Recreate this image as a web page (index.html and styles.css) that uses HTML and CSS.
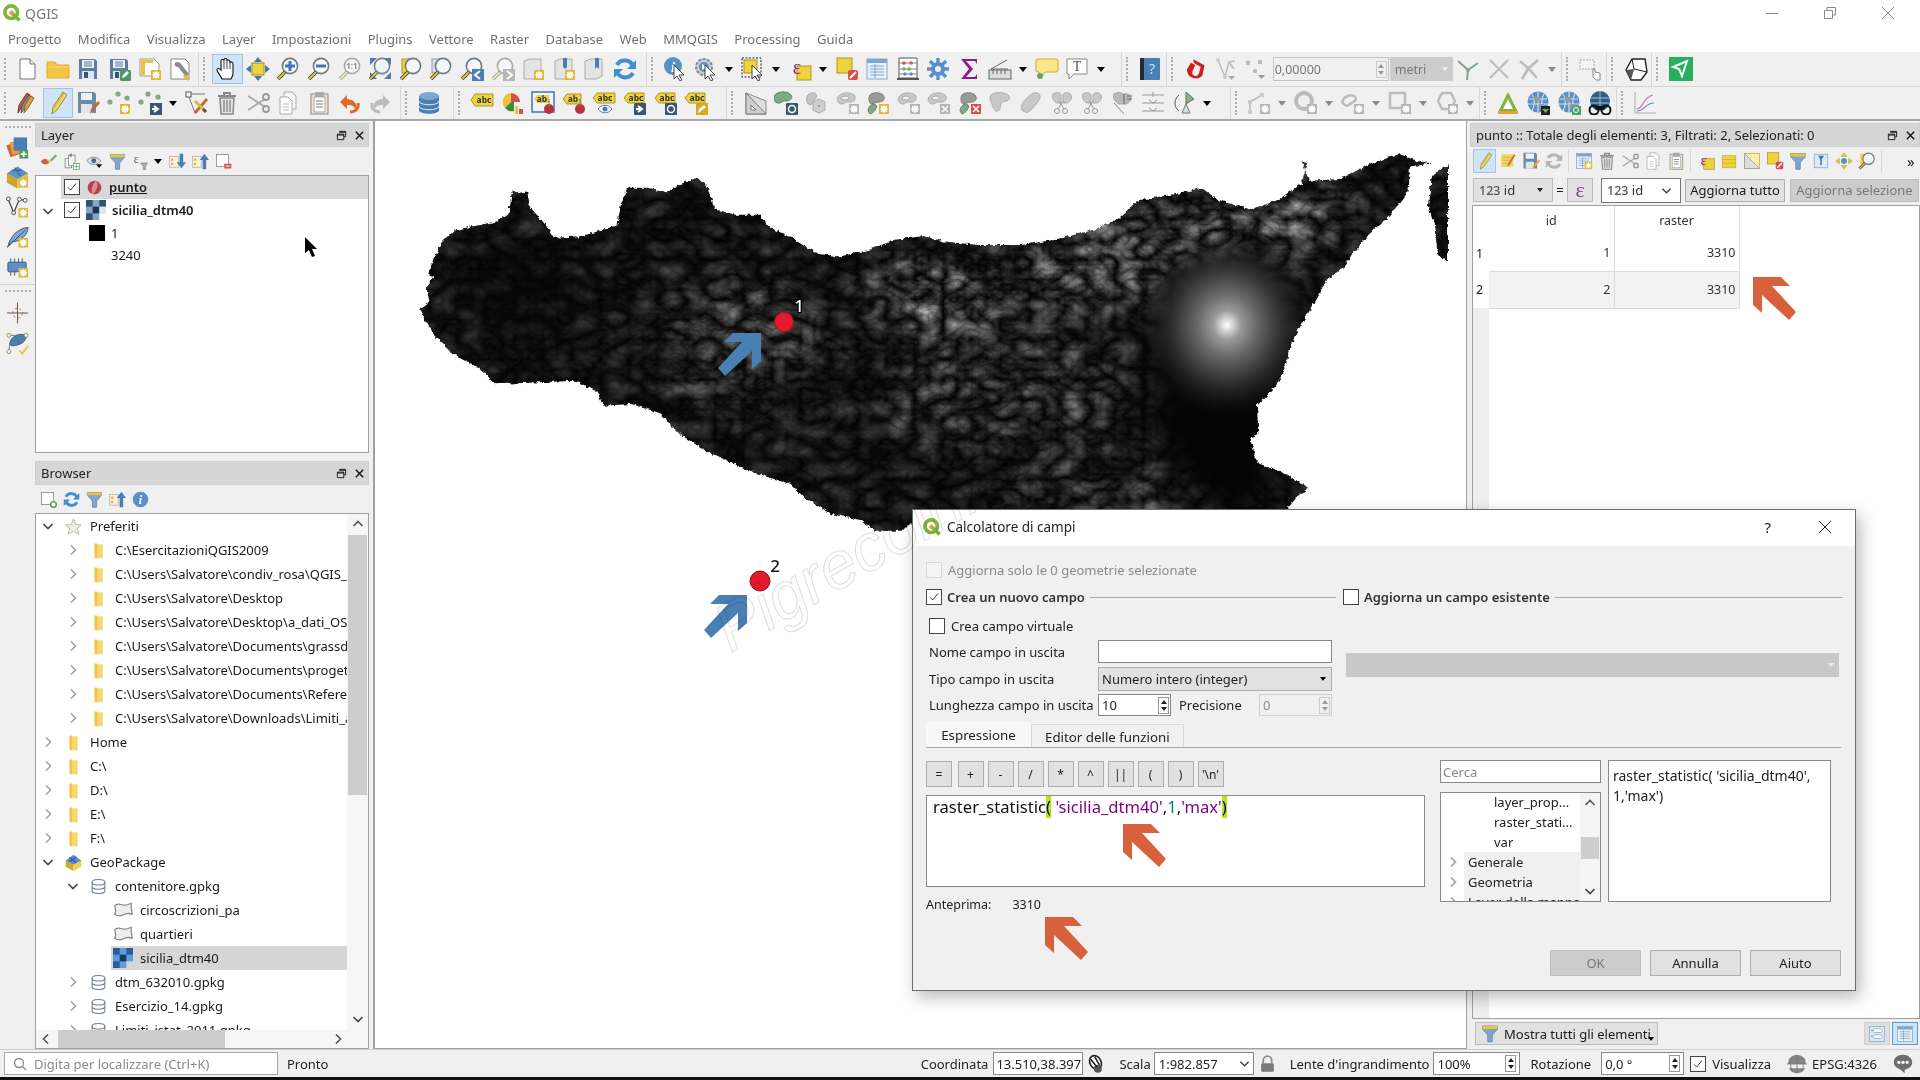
FILE: index.html
```html
<!DOCTYPE html>
<html lang="it">
<head>
<meta charset="utf-8">
<title>QGIS</title>
<link rel="stylesheet" href="styles.css">
</head>
<body>
<svg class="defs" xmlns="http://www.w3.org/2000/svg">
<symbol id="qgis" viewBox="0 0 24 24"><circle cx="11" cy="11" r="7.6" fill="#fff" stroke="#7fb53c" stroke-width="4.4"/><path d="M12 12l9 9" stroke="#7fb53c" stroke-width="4"/><path d="M8 12l4-4 2 4-3 3z" fill="#e9a03a"/></symbol>
<symbol id="new" viewBox="0 0 24 24"><path d="M5 2h10l5 5v15H5z" fill="#fff" stroke="#777"/><path d="M15 2v5h5" fill="#e8e8e8" stroke="#777"/></symbol>
<symbol id="open" viewBox="0 0 24 24"><path d="M1 5h8l2 3h12v13H1z" fill="#f4c542" stroke="#e0a92a"/><path d="M1 10h22" stroke="#fbdc7a"/></symbol>
<symbol id="save" viewBox="0 0 24 24"><path d="M3 2h16l2 2v18H3z" fill="#5a7ca0"/><rect x="6" y="3" width="12" height="8" fill="#eef2f6"/><path d="M8 5h8M8 7h8M8 9h8" stroke="#5a7ca0"/><rect x="6" y="14" width="12" height="8" fill="#dfe5ea"/><rect x="8" y="15" width="4" height="6" fill="#3d5670"/></symbol>
<symbol id="saveas" viewBox="0 0 24 24"><use href="#save"/><rect x="13" y="13" width="11" height="11" rx="1.5" fill="#4d9a5f"/><path d="M15 21l1-3 4-4 2 2-4 4z" fill="#fff"/></symbol>
<symbol id="layout" viewBox="0 0 24 24"><path d="M2 2h14l5 5v12H2z" fill="#fff" stroke="#999"/><path d="M3 3h4v15H3zM3 3h12v3H3z" fill="#e8c53a"/><use href="#by"/></symbol>
<symbol id="by" viewBox="0 0 24 24"><rect x="13" y="13" width="10" height="10" fill="#e1b93a"/><circle cx="18" cy="18" r="3" fill="#fff"/><path d="M18 14v8M14 18h8M15 15l6 6M21 15l-6 6" stroke="#fff"/></symbol>
<symbol id="bg" viewBox="0 0 24 24"><rect x="13" y="13" width="10" height="10" fill="#b6b6b6"/><circle cx="18" cy="18" r="3" fill="#fff"/><path d="M18 14v8M14 18h8M15 15l6 6M21 15l-6 6" stroke="#fff"/></symbol>
<symbol id="style" viewBox="0 0 24 24"><path d="M3 2h14l4 4v16H3z" fill="#fff" stroke="#888"/><path d="M7 6c2-2 5-1 6 1l8 10-3 3-8-10c-3 0-4-2-3-4z" fill="#8c8c8c"/><path d="M16 18l5 5" stroke="#e1b93a" stroke-width="3"/></symbol>
<symbol id="hand" viewBox="0 0 24 24"><path d="M7 22c-1-3-5-7-5-9 0-2 2-2 4 0V4c0-2 3-2 3 0V3c0-2 3-2 3 0v1c0-2 3-1 3 1v1c0-2 3-1 3 1v9c0 3-1 4-2 6z" fill="#fff" stroke="#111" stroke-width="1.1"/><path d="M9 4v8M12 4v8M15 5v7" stroke="#111" stroke-width=".8"/></symbol>
<symbol id="pan" viewBox="0 0 24 24"><rect x="6" y="6" width="12" height="12" fill="#f0d33c" stroke="#9c8a20"/><path d="M12 0l4 5H8zM12 24l4-5H8zM0 12l5-4v8zM24 12l-5-4v8z" fill="#3f77b5"/></symbol>
<symbol id="mag" viewBox="0 0 24 24"><path d="M9 15l-7 7" stroke="#333" stroke-width="3.6"/><path d="M9 15l-7 7" stroke="#e8c53a" stroke-width="2"/><circle cx="14" cy="9" r="7.6" fill="#f5f7f9" stroke="#6c7a88" stroke-width="1.6"/></symbol>
<symbol id="magg" viewBox="0 0 24 24"><path d="M9 15l-7 7" stroke="#999" stroke-width="3.6"/><path d="M9 15l-7 7" stroke="#f0e6b0" stroke-width="2"/><circle cx="14" cy="9" r="7.6" fill="#f5f7f9" stroke="#aaa" stroke-width="1.6"/></symbol>
<symbol id="zin" viewBox="0 0 24 24"><use href="#mag"/><path d="M14 4v10M9 9h10" stroke="#3f77b5" stroke-width="3"/></symbol>
<symbol id="zout" viewBox="0 0 24 24"><use href="#mag"/><path d="M9 9h10" stroke="#3f77b5" stroke-width="3"/></symbol>
<symbol id="zfull" viewBox="0 0 24 24"><rect x="5" y="4" width="15" height="15" fill="#dfe9f3"/><path d="M2 1h7L2 8zM23 1h-7l7 7zM2 22h7l-7-7zM23 22h-7l7-7z" fill="#4a7fb5"/><use href="#mag" opacity=".9"/></symbol>
<symbol id="zsel" viewBox="0 0 24 24"><rect x="3" y="2" width="14" height="14" fill="#f0d33c" stroke="#a89720"/><use href="#mag"/></symbol>
<symbol id="zlay" viewBox="0 0 24 24"><rect x="3" y="2" width="14" height="14" fill="#ddd" stroke="#999"/><use href="#mag"/></symbol>
<symbol id="zlast" viewBox="0 0 24 24"><use href="#mag"/><rect x="12" y="12" width="12" height="12" fill="#4a7fb5"/><path d="M20 14l-5 4 5 4" fill="none" stroke="#fff" stroke-width="2"/></symbol>
<symbol id="znext" viewBox="0 0 24 24"><use href="#magg"/><rect x="12" y="12" width="12" height="12" fill="#b6b6b6"/><path d="M16 14l5 4-5 4" fill="none" stroke="#fff" stroke-width="2"/></symbol>
<symbol id="newmap" viewBox="0 0 24 24"><path d="M3 4l6-2h11v17l-6 3H3z" fill="#e4e4e4" stroke="#aaa"/><use href="#by"/></symbol>
<symbol id="map3d" viewBox="0 0 24 24"><path d="M3 4l6-2h11v17l-6 3H3z" fill="#e4e4e4" stroke="#aaa"/><path d="M11 1h4v9l-2 2-2-2z" fill="#4a7fb5"/><use href="#by"/></symbol>
<symbol id="book" viewBox="0 0 24 24"><path d="M3 4l6-2h11v17l-6 3H3z" fill="#e4e4e4" stroke="#aaa"/><path d="M13 1h4v11l-2-2-2 2z" fill="#4a7fb5"/></symbol>
<symbol id="refresh" viewBox="0 0 24 24"><path d="M20 9A9 9 0 0 0 4 8" fill="none" stroke="#3f8fd5" stroke-width="4"/><path d="M23 3v9h-9z" fill="#3f8fd5"/><path d="M4 15a9 9 0 0 0 16 1" fill="none" stroke="#3f8fd5" stroke-width="4"/><path d="M1 21v-9h9z" fill="#3f8fd5"/></symbol>
<symbol id="refreshg" viewBox="0 0 24 24"><path d="M20 9A9 9 0 0 0 4 8" fill="none" stroke="#b5b5b5" stroke-width="4"/><path d="M23 3v9h-9z" fill="#b5b5b5"/><path d="M4 15a9 9 0 0 0 16 1" fill="none" stroke="#b5b5b5" stroke-width="4"/><path d="M1 21v-9h9z" fill="#b5b5b5"/></symbol>
<symbol id="ptr" viewBox="0 0 24 24"><path d="M11 8v14l3-3 3 5 2-1-3-5h5z" fill="#fff" stroke="#333" stroke-width=".9"/></symbol>
<symbol id="infob" viewBox="0 0 24 24"><circle cx="10" cy="9" r="9" fill="#5b8fc7"/></symbol>
<symbol id="action" viewBox="0 0 24 24"><circle cx="10" cy="10" r="8" fill="#ccc" stroke="#888" stroke-width="2" stroke-dasharray="3 1.5"/><circle cx="10" cy="10" r="5" fill="#5b8fc7"/><path d="M8 7l5 3-5 3z" fill="#fff"/><use href="#ptr"/></symbol>
<symbol id="select" viewBox="0 0 24 24"><rect x="1" y="1" width="19" height="19" fill="none" stroke="#222" stroke-dasharray="2 1.5"/><rect x="3" y="3" width="13" height="13" fill="#f0d33c" stroke="#a89720"/><use href="#ptr"/></symbol>
<symbol id="selexb" viewBox="0 0 24 24"><rect x="9" y="9" width="14" height="14" fill="#f0d33c" stroke="#a89720"/></symbol>
<symbol id="desel" viewBox="0 0 24 24"><rect x="2" y="1" width="15" height="15" fill="#f0d33c" stroke="#a89720"/><rect x="13" y="13" width="10" height="10" rx="2" fill="#d94f4f"/><path d="M15 21l6-6" stroke="#fff" stroke-width="2"/></symbol>
<symbol id="table" viewBox="0 0 24 24"><rect x="2" y="2" width="20" height="20" fill="#e9f1f9" stroke="#7fa6cf"/><rect x="2" y="2" width="20" height="4" fill="#7fa6cf"/><path d="M5 9h14M5 12h14M5 15h14M5 18h14M10 7v14" stroke="#7fa6cf"/></symbol>
<symbol id="abacus" viewBox="0 0 24 24"><path d="M3 1h18v20H3z" fill="#fff" stroke="#555"/><path d="M3 6h18M3 12h18M3 17h18" stroke="#888"/><circle cx="8" cy="6" r="1.8" fill="#d94f4f"/><circle cx="15" cy="6" r="1.8" fill="#d94f4f"/><circle cx="8" cy="12" r="1.8" fill="#6ab04c"/><circle cx="13" cy="12" r="1.8" fill="#6ab04c"/><circle cx="9" cy="17" r="1.8" fill="#5b8fc7"/><circle cx="15" cy="17" r="1.8" fill="#5b8fc7"/><path d="M1 22h22" stroke="#555" stroke-width="2"/></symbol>
<symbol id="gear" viewBox="0 0 24 24"><circle cx="12" cy="12" r="7" fill="#5b8fc7"/><path d="M12 1v22M1 12h22M4 4l16 16M20 4L4 20" stroke="#5b8fc7" stroke-width="3.4"/><circle cx="12" cy="12" r="3" fill="#eaf1f8"/></symbol>
<symbol id="sigma" viewBox="0 0 24 24"><path d="M4 2h16v5l-2-3H9l7 8-7 8h9l2-3v5H4l8-10z" fill="#8c1c8c"/></symbol>
<symbol id="ruler" viewBox="0 0 24 24"><rect x="1" y="13" width="22" height="9" fill="#ddd" stroke="#666"/><path d="M5 13v4M9 13v4M13 13v4M17 13v4" stroke="#666"/><path d="M3 12L19 3M3 12h17" stroke="#666" fill="none"/></symbol>
<symbol id="tip" viewBox="0 0 24 24"><path d="M3 2h18a2 2 0 0 1 2 2v9a2 2 0 0 1-2 2H10l-5 7-1-7H3a2 2 0 0 1-2-2V4a2 2 0 0 1 2-2z" fill="#fbe88a" stroke="#c9a93a"/><circle cx="5" cy="19" r="3" fill="#6f9b6f"/></symbol>
<symbol id="textann" viewBox="0 0 24 24"><path d="M2 2h20v15H9l-5 5v-5H2z" fill="#fff" stroke="#888"/></symbol>
<symbol id="help" viewBox="0 0 24 24"><rect x="2" y="1" width="20" height="22" rx="1" fill="#4a7fb5"/><rect x="2" y="1" width="4" height="22" fill="#1e2a36"/></symbol>
<symbol id="magnet" viewBox="0 0 24 24"><path d="M12 2l10 8-4 10a9 9 0 0 1-14-9l5-6 4 3-4 6a3 3 0 0 0 6 3l3-6-6-5z" fill="#cc1f1f" transform="rotate(-10 12 12)"/></symbol>
<symbol id="vertex" viewBox="0 0 24 24"><path d="M4 3l7 17 4-15 6-1M15 5l5 7" fill="none" stroke="#bbb" stroke-width="1.5"/><path d="M14 19h7l-3.500 4z" fill="#aaa"/><circle cx="4" cy="3" r="2" fill="#ccc"/><circle cx="11" cy="20" r="2" fill="#ccc"/></symbol>
<symbol id="dots" viewBox="0 0 24 24"><rect x="2" y="4" width="4" height="4" fill="#bbb"/><rect x="14" y="3" width="4" height="4" fill="#bbb"/><rect x="9" y="12" width="4" height="4" fill="#bbb"/><path d="M14 18h7l-3.500 4z" fill="#999"/></symbol>
<symbol id="ygreen" viewBox="0 0 24 24"><path d="M2 4l10 9 10-7M12 13l-1 10" fill="none" stroke="#7ba88a" stroke-width="2"/><circle cx="12" cy="13" r="2" fill="#999"/></symbol>
<symbol id="xg" viewBox="0 0 24 24"><path d="M3 3l18 18M21 3L3 21" stroke="#bbb" stroke-width="2"/></symbol>
<symbol id="xg2" viewBox="0 0 24 24"><path d="M5 22l6-10M21 3l-9 8M3 4l9 8 8 9" fill="none" stroke="#bbb" stroke-width="2.500"/></symbol>
<symbol id="recth" viewBox="0 0 24 24"><rect x="1" y="3" width="14" height="9" fill="#f6f6f6" stroke="#aaa" stroke-dasharray="2 1"/><path d="M14 12v8l3 3h4v-7l-5-1v-3z" fill="#fff" stroke="#888"/></symbol>
<symbol id="shape3d" viewBox="0 0 24 24"><path d="M8 2h13l2 13-6 8H7L2 13z" fill="#fff" stroke="#222" stroke-width="1.4"/><path d="M2 13l5 10 3-11z" fill="#555"/><path d="M8 2l2 10 13 3" fill="none" stroke="#222"/></symbol>
<symbol id="greenb" viewBox="0 0 24 24"><rect width="24" height="24" fill="#27ae60"/><path d="M4 10l14-6-5 15-3-7z" fill="none" stroke="#fff" stroke-width="2"/></symbol>
<symbol id="pencils" viewBox="0 0 24 24"><path d="M3 22l1-8 8-12 3 2-9 13z" fill="#c9553a" stroke="#7a3a2a"/><path d="M6 22l1-8 7-10 3 2-7 11z" fill="#8a8a8a" stroke="#555"/><path d="M9 22l1-8 6-9 3 2-6 10z" fill="#d9a04a" stroke="#8a6a2a"/></symbol>
<symbol id="pencil" viewBox="0 0 24 24"><path d="M6 23l1-7L17 1l4 3-10 15z" fill="#f0d860" stroke="#9c8a30"/><path d="M8 17L18 2" stroke="#c9a93a"/></symbol>
<symbol id="saveedit" viewBox="0 0 24 24"><path d="M2 1h16l2 2v19H2z" fill="#6b8aa8"/><rect x="5" y="2" width="11" height="7" fill="#eef2f6"/><rect x="5" y="13" width="11" height="9" fill="#dfe5ea"/><path d="M14 23l1-5 7-8 2 2-7 8z" fill="#c9653a"/></symbol>
<symbol id="addpt" viewBox="0 0 24 24"><circle cx="11" cy="3" r="2.600" fill="#7fa87f"/><circle cx="20" cy="7" r="2.600" fill="#7fa87f"/><circle cx="3" cy="11" r="2.600" fill="#7fa87f"/><use href="#by"/></symbol>
<symbol id="movept" viewBox="0 0 24 24"><circle cx="10" cy="3" r="2.600" fill="#7fa87f"/><circle cx="20" cy="6" r="2.600" fill="#7fa87f"/><circle cx="3" cy="11" r="2.600" fill="#7fa87f"/><rect x="12" y="12" width="12" height="12" fill="#3d5670"/><path d="M14 18h5m-3-3l4 3-4 3" fill="none" stroke="#fff" stroke-width="2"/></symbol>
<symbol id="node" viewBox="0 0 24 24"><rect x="1" y="1" width="5" height="5" fill="#fff" stroke="#555"/><path d="M6 3h14M4 6l6 16" stroke="#777"/><path d="M10 22L22 8" stroke="#c9653a" stroke-width="3"/><path d="M10 10l11 11" stroke="#e1b93a" stroke-width="3"/><path d="M21 21l-3-3" stroke="#555" stroke-width="3"/></symbol>
<symbol id="trash" viewBox="0 0 24 24"><path d="M3 5h18M9 5V2h6v3" fill="none" stroke="#888" stroke-width="2"/><path d="M5 7h14l-1 16H6z" fill="#e4e4e4" stroke="#888" stroke-width="1.5"/><path d="M9 9v12M12 9v12M15 9v12" stroke="#888" stroke-width="1.4"/></symbol>
<symbol id="cut" viewBox="0 0 24 24"><path d="M2 5l17 11M2 19L19 8" stroke="#aaa" stroke-width="1.800" fill="none"/><circle cx="20" cy="18" r="3" fill="none" stroke="#999" stroke-width="1.800"/><circle cx="20" cy="6" r="3" fill="none" stroke="#999" stroke-width="1.800"/></symbol>
<symbol id="copy" viewBox="0 0 24 24"><path d="M8 1h8l4 4v13H8z" fill="#f6f6f6" stroke="#aaa"/><path d="M4 6h8l4 4v13H4z" fill="#fff" stroke="#aaa"/><path d="M7 13h6M7 16h6M7 19h6" stroke="#bbb"/></symbol>
<symbol id="paste" viewBox="0 0 24 24"><rect x="4" y="3" width="17" height="20" fill="#f2e5c8" stroke="#888"/><rect x="7" y="6" width="11" height="15" fill="#fff" stroke="#aaa"/><rect x="8" y="1" width="9" height="5" fill="#aaa"/><path d="M9 10h7M9 13h7M9 16h7" stroke="#777"/></symbol>
<symbol id="undo" viewBox="0 0 24 24"><path d="M9 4L2 11l7 7v-4c5 0 8 1 8 5 3-6 0-10-8-11z" fill="#e06a2a"/><path d="M12 21c6 0 9-4 8-9" fill="none" stroke="#e06a2a" stroke-width="3"/></symbol>
<symbol id="redo" viewBox="0 0 24 24"><path d="M15 4l7 7-7 7v-4c-5 0-8 1-8 5-3-6 0-10 8-11z" fill="#bbb"/><path d="M12 21c-6 0-9-4-8-9" fill="none" stroke="#bbb" stroke-width="3"/></symbol>
<symbol id="db" viewBox="0 0 24 24"><path d="M2 5v14c0 5 20 5 20 0V5z" fill="#4a7fb5"/><ellipse cx="12" cy="5" rx="10" ry="4" fill="#7fa6cf"/><path d="M2 10c0 5 20 5 20 0M2 15c0 5 20 5 20 0" fill="none" stroke="#dfe9f3"/></symbol>
<symbol id="abc" viewBox="0 0 24 24"><path d="M1 9l4-6h18v12H5z" fill="#f0d33c" stroke="#a89720"/></symbol>
<symbol id="pie" viewBox="0 0 24 24"><path d="M10 2a9 9 0 0 1 9 9h-9z" fill="#d94f4f"/><path d="M10 2v9l-6 6A9 9 0 0 1 10 2z" fill="#e8c53a"/><path d="M4 17l6-6h3v9a9 9 0 0 1-9-3z" fill="#3f8a3f"/><rect x="14" y="15" width="3" height="8" fill="#e8c53a"/><rect x="18" y="18" width="4" height="5" fill="#d94f4f"/></symbol>
<symbol id="abpin" viewBox="0 0 24 24"><rect x="1" y="1" width="22" height="20" fill="#eef4fb" stroke="#3f77b5" stroke-width="1.500"/><path d="M3 8l3-4h12v8H6z" fill="#f0d33c"/><circle cx="18" cy="18" r="5" fill="#b8323c"/><path d="M18 8v8" stroke="#777"/></symbol>
<symbol id="abpin2" viewBox="0 0 24 24"><path d="M1 8l4-5h14v10H5z" fill="#f0d33c" stroke="#a89720"/><circle cx="18" cy="18" r="5" fill="#b8323c"/><path d="M18 8v8" stroke="#777"/></symbol>
<symbol id="abeye" viewBox="0 0 24 24"><path d="M1 7l4-5h18v10H5z" fill="#f0d33c" stroke="#a89720"/><path d="M6 18c4-5 10-5 14 0-4 5-10 5-14 0z" fill="#fff" stroke="#4a7fb5"/><circle cx="13" cy="18" r="2.500" fill="#4a7fb5"/></symbol>
<symbol id="abmove" viewBox="0 0 24 24"><path d="M1 7l4-5h16v10H5z" fill="#f0d33c" stroke="#a89720"/><rect x="11" y="12" width="12" height="12" rx="1" fill="#3d5670"/><path d="M13 18h5m-3-3l4 3-4 3" fill="none" stroke="#fff" stroke-width="2"/></symbol>
<symbol id="abrot" viewBox="0 0 24 24"><path d="M1 7l4-5h16v10H5z" fill="#f0d33c" stroke="#a89720"/><rect x="11" y="12" width="12" height="12" rx="1" fill="#3d5670"/><circle cx="17" cy="18" r="3.500" fill="none" stroke="#fff" stroke-width="1.500"/></symbol>
<symbol id="abedit" viewBox="0 0 24 24"><path d="M1 7l4-5h16v10H5z" fill="#f0d33c" stroke="#a89720"/><rect x="12" y="12" width="12" height="12" fill="#d9a81e"/><path d="M14 22l1-4 5-4 2 2-5 4z" fill="#fff"/></symbol>
<symbol id="tri" viewBox="0 0 24 24"><path d="M2 2l20 8v13H2z" fill="#ddd" stroke="#888"/><path d="M2 2v21h20z" fill="#cfcfcf" stroke="#777"/><path d="M7 14v5h5z" fill="#f0f0f0" stroke="#777"/></symbol>
<symbol id="blobg" viewBox="0 0 24 24"><path d="M1 4c3-4 12-4 15-1 4 3 1 7-4 7C9 9 7 13 4 12 0 12-1 7 1 4z" fill="#7fa886" stroke="#5f8a66"/><rect x="12" y="12" width="12" height="12" rx="1" fill="#3d5670"/><circle cx="18" cy="18" r="3.500" fill="none" stroke="#fff" stroke-width="1.500"/></symbol>
<symbol id="hex" viewBox="0 0 24 24"><path d="M3 4c3-3 8-3 9 1l-6 9c-4 0-6-6-3-10z" fill="#c4c4c4" stroke="#aaa"/><path d="M14 8l6 3v8l-6 3-6-3v-8z" fill="#cfcfcf" stroke="#aaa"/><circle cx="14" cy="15" r="1" fill="#888"/></symbol>
<symbol id="ring" viewBox="0 0 24 24"><path d="M2 6c3-5 12-5 16-2 3 3 0 8-5 7-3-1-5 2-7 2C2 13 0 9 2 6z" fill="#c8c8c8" stroke="#aaa"/><ellipse cx="9" cy="7" rx="4" ry="2" fill="#f0f0f0" stroke="#aaa"/></symbol>
<symbol id="ringg" viewBox="0 0 24 24"><use href="#ring"/><use href="#bg"/></symbol>
<symbol id="ringx" viewBox="0 0 24 24"><use href="#ring"/><rect x="13" y="13" width="10" height="10" fill="#b6b6b6"/><path d="M15 15l6 6M21 15l-6 6" stroke="#fff" stroke-width="1.500"/></symbol>
<symbol id="gsy" viewBox="0 0 24 24"><path d="M4 4c3-3 10-3 13 0 3 4 0 7-4 7-3 0-6 2-7 2-3 0-4-6-2-9z" fill="#9a9a9a" stroke="#777"/><path d="M2 20c0-5 5-8 8-6 2 2-2 8-6 9z" fill="#7fa886" stroke="#5f8a66"/><use href="#by"/></symbol>
<symbol id="gsx" viewBox="0 0 24 24"><path d="M4 4c3-3 10-3 13 0 3 4 0 7-4 7-3 0-6 2-7 2-3 0-4-6-2-9z" fill="#9a9a9a" stroke="#777"/><path d="M2 20c0-5 5-8 8-6 2 2-2 8-6 9z" fill="#7fa886" stroke="#5f8a66"/><rect x="13" y="13" width="10" height="10" fill="#d94f4f"/><path d="M15 15l6 6M21 15l-6 6" stroke="#fff" stroke-width="1.500"/></symbol>
<symbol id="blob2" viewBox="0 0 24 24"><path d="M4 3c4-2 14-2 17 2 2 5-3 5-7 6-2 2-1 8-4 9-3 1-5-3-6-7C3 10 0 6 4 3z" fill="#c8c8c8" stroke="#aaa"/></symbol>
<symbol id="blob3" viewBox="0 0 24 24"><path d="M4 20c-4-3 0-9 3-12S14 1 18 2c5 1 3 7 0 10s-6 8-9 9c-2 1-3 0-5-1z" fill="#c8c8c8" stroke="#aaa"/></symbol>
<symbol id="sciss" viewBox="0 0 24 24"><path d="M3 3c3-2 7-2 8 1v8H8C5 12 1 7 3 3zM13 4c1-3 6-3 8 0 2 4-2 8-5 8h-3z" fill="#c8c8c8" stroke="#aaa"/><circle cx="7" cy="20" r="2.500" fill="none" stroke="#999"/><circle cx="15" cy="20" r="2.500" fill="none" stroke="#999"/><path d="M8 18l5-8M14 18L9 10" stroke="#999"/></symbol>
<symbol id="sciss2" viewBox="0 0 24 24"><path d="M3 3c3-2 7-2 9 0 4-1 9 1 8 5-1 4-5 6-8 5H8C5 12 1 7 3 3z" fill="#b8b8b8" stroke="#aaa"/><path d="M13 3v10M16 5h5M16 8h5" stroke="#666"/><path d="M3 12l10 11" stroke="#888"/></symbol>
<symbol id="lines3" viewBox="0 0 24 24"><path d="M1 4h22M1 12h22M1 20h22M12 1v5M8 9l4 3 4-3M8 17l4 3 4-3" fill="none" stroke="#999"/></symbol>
<symbol id="rot" viewBox="0 0 24 24"><path d="M7 4a10 10 0 0 0 0 16" fill="none" stroke="#555"/><path d="M14 1l8 7-8 5z" fill="#7fb58a" stroke="#557c5c"/><path d="M14 13l-4 9h8z" fill="#ddd" stroke="#777"/></symbol>
<symbol id="nodeg" viewBox="0 0 24 24"><path d="M3 22V11L15 4" fill="none" stroke="#bbb" stroke-width="1.500"/><rect x="1" y="9" width="4" height="4" fill="#ccc"/><rect x="13" y="2" width="4" height="4" fill="#ccc"/><rect x="1" y="19" width="4" height="4" fill="#ccc"/><use href="#bg"/></symbol>
<symbol id="ringc" viewBox="0 0 24 24"><circle cx="10" cy="10" r="8" fill="none" stroke="#bbb" stroke-width="4"/><use href="#bg"/></symbol>
<symbol id="clouds" viewBox="0 0 24 24"><path d="M2 9c2-4 8-6 11-4 3 2 2 5-1 6-3 2-5 5-8 3-2-1-3-3-2-5z" fill="none" stroke="#bbb" stroke-width="2.500"/><use href="#bg"/></symbol>
<symbol id="rectg" viewBox="0 0 24 24"><rect x="2" y="2" width="15" height="15" fill="none" stroke="#bbb" stroke-width="2.500"/><use href="#bg"/></symbol>
<symbol id="hexg" viewBox="0 0 24 24"><path d="M7 2h9l4 8-4 8H7L3 10z" fill="none" stroke="#bbb" stroke-width="2.500"/><use href="#bg"/></symbol>
<symbol id="triy" viewBox="0 0 24 24"><path d="M12 1L2 21h20z" fill="#7fb53c"/><path d="M12 8l-5 10h10z" fill="#fff"/><rect x="2" y="20" width="20" height="3" fill="#e9a03a"/></symbol>
<symbol id="globe" viewBox="0 0 24 24"><circle cx="11" cy="11" r="10.500" fill="#5b8fc7"/><path d="M2 8h18M1 13h20M11 1v20M5 3c3 4 3 12 0 17M17 3c-3 4-3 12 0 17" fill="none" stroke="#cfe0f0" stroke-width="1.200"/><path d="M6 6h7v5H8zM12 13h5v5h-4z" fill="#9a9a9a"/></symbol>
<symbol id="globea" viewBox="0 0 24 24"><use href="#globe"/><rect x="14" y="15" width="9" height="9" fill="#222"/><path d="M15 18h7l-3.500 4z" fill="#6ab04c"/></symbol>
<symbol id="globes" viewBox="0 0 24 24"><use href="#globe"/><rect x="14" y="15" width="9" height="9" fill="#4aa06a"/><circle cx="18" cy="19" r="2.500" fill="none" stroke="#fff"/></symbol>
<symbol id="globeb" viewBox="0 0 24 24"><circle cx="12" cy="10" r="10" fill="#2f5d8a"/><path d="M3 7h18M2 12h20M12 0v20" stroke="#9fbcd8" stroke-width="1"/><circle cx="6" cy="19" r="4.500" fill="none" stroke="#111" stroke-width="2"/><circle cx="18" cy="19" r="4.500" fill="none" stroke="#111" stroke-width="2"/><path d="M6 15h12l-2 4H8z" fill="#111"/></symbol>
<symbol id="chart" viewBox="0 0 24 24"><path d="M2 1v21h21" fill="none" stroke="#aaa"/><path d="M4 18c6 0 6-12 16-14" fill="none" stroke="#e26ab0" stroke-width="1.200"/><path d="M4 20c8 0 8-8 17-8" fill="none" stroke="#5b8fc7" stroke-width="1.200"/></symbol>
<symbol id="addlayers" viewBox="0 0 24 24"><rect x="2" y="8" width="13" height="13" fill="#d9603c" transform="rotate(-20 8 14)"/><rect x="5" y="6" width="13" height="13" fill="#e9a03a" transform="rotate(-10 11 12)"/><rect x="8" y="2" width="14" height="14" fill="#4a7fb5"/><rect x="14" y="15" width="9" height="9" fill="#4d9a5f"/><path d="M18.500 16.500v6M15.500 19.500h6" stroke="#fff" stroke-width="1.800"/></symbol>
<symbol id="addgpkg" viewBox="0 0 24 24"><path d="M1 8l11 6v10L1 18z" fill="#caa52a"/><path d="M12 14l11-6v10l-11 6z" fill="#e8c53a"/><path d="M1 8l11-7 11 7-11 6z" fill="#5b8fc7"/><path d="M6 5h10M9 2l6 9" stroke="#3d5670"/><use href="#by"/></symbol>
<symbol id="addvec" viewBox="0 0 24 24"><path d="M2 3l6 15 6-14 6 1" fill="none" stroke="#444" stroke-width="1.300"/><circle cx="2.500" cy="3.500" r="2" fill="#fff" stroke="#444"/><circle cx="8" cy="18" r="2" fill="#fff" stroke="#444"/><circle cx="14" cy="4" r="2" fill="#fff" stroke="#444"/><circle cx="20" cy="5" r="2" fill="#fff" stroke="#444"/><use href="#by"/></symbol>
<symbol id="feather" viewBox="0 0 24 24"><path d="M2 22C4 12 12 3 23 2c0 8-8 15-17 15z" fill="#7fa6cf" stroke="#3d5670"/><path d="M1 23L20 5" stroke="#3d5670"/><use href="#by"/></symbol>
<symbol id="chip" viewBox="0 0 24 24"><rect x="2" y="7" width="19" height="10" rx="1" fill="#5b8fc7" stroke="#3d5670"/><path d="M5 3v4M9 3v4M13 3v4M17 3v4M5 17v4M9 17v4" stroke="#3d5670"/><use href="#by"/></symbol>
<symbol id="cross" viewBox="0 0 24 24"><path d="M12 1v22M1 12h22" stroke="#555"/><circle cx="12" cy="12" r="5" fill="none" stroke="#c9553a" stroke-dasharray="2.500 2.500"/></symbol>
<symbol id="topo" viewBox="0 0 24 24"><path d="M4 12C5 5 15 1 20 4c3 4-3 9-8 10-4 1-8 2-8-2z" fill="#4a7fb5" stroke="#3d5670"/><path d="M3 4l17 0M3 20l1-8" stroke="#777"/><circle cx="3" cy="4" r="2" fill="#fff" stroke="#7a9a3a"/><circle cx="21" cy="4" r="2" fill="#fff" stroke="#7a9a3a"/><circle cx="3" cy="21" r="2" fill="#fff" stroke="#7a9a3a"/><path d="M14 20l3 3 6-8" fill="none" stroke="#e8c53a" stroke-width="2"/></symbol>
<symbol id="brush" viewBox="0 0 24 24"><path d="M1 12c3-4 7-5 9-3l3 5c-3 3-9 3-12-2z" fill="#c9653a"/><path d="M9 9c2 1 3 2 4 5l3-3z" fill="#e8c53a"/><path d="M15 11l8-8" stroke="#7fa87f" stroke-width="3"/></symbol>
<symbol id="addgroup" viewBox="0 0 24 24"><rect x="3" y="8" width="9" height="13" fill="#f4f4f4" stroke="#777"/><rect x="8" y="3" width="9" height="15" fill="#f4f4f4" stroke="#777"/><path d="M11 1v4" stroke="#777" stroke-width="3"/><rect x="15" y="15" width="8" height="8" fill="#fff" stroke="#4d9a5f"/><path d="M19 16v6M16 19h6" stroke="#4d9a5f"/></symbol>
<symbol id="eye" viewBox="0 0 24 24"><path d="M1 11c6-7 14-7 20 0-6 7-14 7-20 0z" fill="#ddd" stroke="#777"/><circle cx="11" cy="11" r="3.500" fill="#4a6a8a"/><path d="M14 16h9l-4.500 5z" fill="#111"/></symbol>
<symbol id="filter" viewBox="0 0 24 24"><path d="M2 2h20v4l-7 8v9h-6v-9L2 6z" fill="#7fa6cf" stroke="#5a7ca0"/><rect x="2" y="2" width="20" height="4" fill="#e8c53a"/></symbol>
<symbol id="filterxb" viewBox="0 0 24 24"><path d="M12 14h10l-3 5v5h-3v-5z" fill="#aaa" stroke="#888"/></symbol>
<symbol id="expand" viewBox="0 0 24 24"><rect x="1" y="5" width="12" height="15" fill="#fbf3d5" stroke="#aaa"/><rect x="3" y="8" width="3" height="3" fill="#e8a93a"/><rect x="3" y="14" width="3" height="3" fill="#e8a93a"/><path d="M15 1h5v12h4l-6.500 9L11 13h4z" fill="#4a7fb5"/></symbol>
<symbol id="collapse" viewBox="0 0 24 24"><rect x="1" y="5" width="12" height="15" fill="#fbf3d5" stroke="#aaa"/><rect x="3" y="8" width="3" height="3" fill="#e8a93a"/><rect x="3" y="14" width="3" height="3" fill="#e8a93a"/><path d="M15 23h5V10h4l-6.500-9L11 10h4z" fill="#4a7fb5"/></symbol>
<symbol id="remove" viewBox="0 0 24 24"><rect x="2" y="2" width="17" height="17" fill="#fff" stroke="#777"/><rect x="13" y="15" width="10" height="7" rx="1" fill="#d94f4f"/><path d="M15 18.500h6" stroke="#fff" stroke-width="1.500"/></symbol>
<symbol id="addres" viewBox="0 0 24 24"><rect x="2" y="2" width="17" height="17" fill="#fff" stroke="#777"/><circle cx="19" cy="19" r="4" fill="#fff" stroke="#4d9a5f" stroke-width="2"/></symbol>
<symbol id="infoc" viewBox="0 0 24 24"><circle cx="12" cy="12" r="11" fill="#5b8fc7"/></symbol>
<symbol id="star" viewBox="0 0 24 24"><path d="M12 1l3 8 8 1-6 5 3 8-8-4-8 4 3-8-6-5 8-1z" fill="#eeeedd" stroke="#a8a890"/></symbol>
<symbol id="folder" viewBox="0 0 24 24"><path d="M7 3h11v20H8c-1-3-2-2-2-2z" fill="#f7d774"/><path d="M6 2h4v21H7z" fill="#f2c14e"/></symbol>
<symbol id="gpkg" viewBox="0 0 24 24"><ellipse cx="12" cy="6" rx="9" ry="4" fill="#fff" stroke="#6d7f8f" stroke-width="1.500"/><path d="M3 6v12c0 5 18 5 18 0V6M3 12c0 5 18 5 18 0" fill="none" stroke="#6d7f8f" stroke-width="1.500"/></symbol>
<symbol id="poly" viewBox="0 0 24 24"><path d="M2 7c3-4 6-2 10-1 4 1 6-1 10-2-1 6 1 9 1 13-3-1-6-2-11 1-4 2-7 1-10-1 2-3 1-7 0-10z" fill="#eee" stroke="#888" stroke-width="1.500"/></symbol>
<symbol id="raster" viewBox="0 0 24 24"><rect width="24" height="24" fill="#7fa6cf"/><rect width="8" height="8" fill="#34506c"/><rect x="16" width="8" height="8" fill="#34506c"/><rect x="8" y="8" width="8" height="8" fill="#203348"/><rect y="16" width="8" height="8" fill="#34506c"/><rect x="16" y="8" width="8" height="8" fill="#d8e4f0"/><rect x="16" y="16" width="8" height="8" fill="#fff"/></symbol>
<symbol id="rasterb" viewBox="0 0 24 24"><rect width="24" height="24" fill="#5b9bdf"/><rect width="8" height="8" fill="#2f5a8a"/><rect x="16" width="8" height="8" fill="#2f5a8a"/><rect x="8" y="8" width="8" height="8" fill="#1c3a5c"/><rect y="16" width="8" height="8" fill="#2f5a8a"/><rect x="16" y="16" width="8" height="8" fill="#d6d6d6"/></symbol>
<symbol id="gpkgb" viewBox="0 0 24 24"><path d="M1 9l11 6v9L1 18z" fill="#d4a928"/><path d="M12 15l11-6v9l-11 6z" fill="#f0d04c"/><path d="M1 9l11-8 11 8-11 6z" fill="#5b8fc7"/><path d="M6 5l10 7M16 4L7 11" stroke="#2f5a8a" stroke-width="1.500"/></symbol>
<symbol id="punto" viewBox="0 0 24 24"><circle cx="12" cy="12" r="11" fill="#b0464e"/><path d="M14 1c6 5 2 14-4 22-6-6 0-18 4-22z" fill="#dd8a90"/></symbol>
<symbol id="crs" viewBox="0 0 24 24"><path d="M1 12a11 11 0 0 1 22 0M2 17h20c-5 8-15 8-20 0z" fill="#888"/><path d="M0 12h24M12 1v22M6 3c-2 6-2 12 0 18M18 3c2 6 2 12 0 18M2 6h20" fill="none" stroke="#777"/></symbol>
<symbol id="crsm" viewBox="0 0 24 24"><ellipse cx="12" cy="10" rx="7" ry="9" fill="#fff" stroke="#222" stroke-width="2" transform="rotate(-30 12 10)"/><circle cx="15" cy="18" r="5" fill="#555"/><path d="M6 6l8 10M11 3l6 10" stroke="#222" stroke-width="2"/></symbol>
<symbol id="lock" viewBox="0 0 24 24"><path d="M6 11V7a6 6 0 0 1 12 0v4" fill="none" stroke="#8a8a8a" stroke-width="2.500"/><rect x="3" y="11" width="18" height="12" rx="2" fill="#7a7a7a"/></symbol>
<symbol id="chat" viewBox="0 0 24 24"><path d="M12 1C5 1 1 5 1 10c0 4 3 7 7 8l6 5v-4c5-1 9-4 9-9 0-5-5-9-11-9z" fill="#6d6d6d"/><circle cx="7" cy="10" r="2" fill="#fff"/><circle cx="12" cy="10" r="2" fill="#fff"/><circle cx="17" cy="10" r="2" fill="#fff"/></symbol>
<symbol id="chevr" viewBox="0 0 12 12"><path d="M4 1.500L8.500 6 4 10.500" fill="none" stroke="#a0a0a0" stroke-width="1.600"/></symbol>
<symbol id="chevd" viewBox="0 0 12 12"><path d="M1.500 4L6 8.500 10.500 4" fill="none" stroke="#444" stroke-width="1.600"/></symbol>
<symbol id="chevu" viewBox="0 0 12 12"><path d="M1.500 8L6 3.500 10.500 8" fill="none" stroke="#555" stroke-width="1.600"/></symbol>
<symbol id="chevl" viewBox="0 0 12 12"><path d="M8 1.500L3.500 6 8 10.500" fill="none" stroke="#555" stroke-width="1.600"/></symbol>
<symbol id="chevrd" viewBox="0 0 12 12"><path d="M4 1.500L8.500 6 4 10.500" fill="none" stroke="#555" stroke-width="1.600"/></symbol>
<symbol id="float" viewBox="0 0 12 12"><path d="M3.500 1.500h7v6h-2M1.500 4.500h7v6h-7zM1.500 5.500h7M3.500 2.500h7" fill="none" stroke="#111"/></symbol>
<symbol id="close" viewBox="0 0 12 12"><path d="M2 2l8 8M10 2l-8 8" stroke="#111" stroke-width="1.500"/></symbol>
<symbol id="check" viewBox="0 0 16 16"><path d="M3.500 8.500l3 3 6-7.500" fill="none" stroke="#333" stroke-width="1.100"/></symbol>
<symbol id="arr-nw" viewBox="0 0 43 43"><path d="M0 0h28l9 9H19l24 26-7 8L9 18v18l-9-8z" fill="#d9603c"/></symbol>
<symbol id="arr-ne" viewBox="0 0 43 43"><path d="M43 0H15l-9 9h18L0 35l7 8 27-25v18l9-8z" fill="#4a7fb5"/></symbol>
<symbol id="form" viewBox="0 0 24 24"><rect x="2" y="2" width="20" height="20" fill="#dcebf7" stroke="#7fa6cf"/><rect x="7" y="5" width="12" height="5" rx="2" fill="#fff" stroke="#7fa6cf"/><rect x="7" y="13" width="12" height="5" rx="2" fill="#fff" stroke="#7fa6cf"/><path d="M4 7h2M4 15h2" stroke="#555"/></symbol>
<symbol id="pencilsa" viewBox="0 0 24 24"><rect x="3" y="3" width="16" height="17" fill="#f0d860"/><path d="M5 7h12M5 11h12M5 15h12" stroke="#c9a93a"/><path d="M11 20l1-4 8-13 2 1-8 13z" fill="#c9653a"/></symbol>
<symbol id="saveadd" viewBox="0 0 24 24"><path d="M2 1h16l2 2v19H2z" fill="#6b8aa8"/><rect x="5" y="2" width="11" height="7" fill="#eef2f6"/><rect x="5" y="13" width="11" height="9" fill="#dfe5ea"/><path d="M14 23l1-5 7-8 2 2-7 8z" fill="#e8a93a"/></symbol>
<symbol id="tadd" viewBox="0 0 24 24"><use href="#table"/><use href="#by"/></symbol>
<symbol id="selall" viewBox="0 0 24 24"><rect x="3" y="5" width="18" height="16" fill="#f0d33c" stroke="#c9a93a"/><path d="M3 10h18M3 15h18" stroke="#c9a93a"/></symbol>
<symbol id="invert" viewBox="0 0 24 24"><rect x="2" y="2" width="20" height="20" fill="#f7eeb0" stroke="#c9a93a"/><path d="M2 2l20 20H2z" fill="#ddd" stroke="#999"/></symbol>
<symbol id="panfilter" viewBox="0 0 24 24"><rect x="3" y="3" width="18" height="18" fill="#dcebf7" stroke="#7fa6cf"/><path d="M8 5h8l-3 5v7l-2 1v-8z" fill="#3f77b5"/></symbol>
<symbol id="panmap" viewBox="0 0 24 24"><path d="M12 1l4 5H8zM12 23l4-5H8zM1 12l5-4v8zM23 12l-5-4v8z" fill="#e8c53a" stroke="#a89720" stroke-width=".5"/><circle cx="12" cy="12" r="4" fill="#5b8fc7"/></symbol>
<symbol id="magy" viewBox="0 0 24 24"><rect x="3" y="2" width="14" height="14" fill="#f0d33c"/><use href="#mag"/></symbol>
</svg>

<div class="titlebar">
  <svg class="qlogo"><use href="#qgis"/></svg>
  <span class="apptitle">QGIS</span>
  <span class="winbtns">
    <svg class="winb" viewBox="0 0 12 12"><path d="M0 6.500h12" stroke="#8a8a8a"/></svg>
    <svg class="winb" viewBox="0 0 12 12"><path d="M.5 3.500h8v8h-8zM3 3V.5h8.500V8H9" fill="none" stroke="#8a8a8a"/></svg>
    <svg class="winb" viewBox="0 0 12 12"><path d="M0 0l12 12M12 0L0 12" stroke="#8a8a8a"/></svg>
  </span>
</div>
<nav class="menubar">
  <span>Progetto</span><span>Modifica</span><span>Visualizza</span><span>Layer</span><span>Impostazioni</span><span>Plugins</span><span>Vettore</span><span>Raster</span><span>Database</span><span>Web</span><span>MMQGIS</span><span>Processing</span><span>Guida</span>
</nav>

<div class="tbar">
  <span class="handle"></span>
  <span class="tb"><svg class="i"><use href="#new"/></svg></span>
  <span class="tb"><svg class="i"><use href="#open"/></svg></span>
  <span class="tb"><svg class="i"><use href="#save"/></svg></span>
  <span class="tb"><svg class="i"><use href="#saveas"/></svg></span>
  <span class="tb"><svg class="i"><use href="#layout"/></svg></span>
  <span class="tb"><svg class="i"><use href="#style"/></svg></span>
  <span class="sep s16"></span>
  <span class="tb on"><svg class="i"><use href="#hand"/></svg></span>
  <span class="tb"><svg class="i"><use href="#pan"/></svg></span>
  <span class="tb"><svg class="i"><use href="#zin"/></svg></span>
  <span class="tb"><svg class="i"><use href="#zout"/></svg></span>
  <span class="tb"><svg class="i" viewBox="0 0 24 24"><use href="#magg"/><text class="t11" x="14" y="12">1:1</text></svg></span>
  <span class="tb"><svg class="i"><use href="#zfull"/></svg></span>
  <span class="tb"><svg class="i"><use href="#zsel"/></svg></span>
  <span class="tb"><svg class="i"><use href="#zlay"/></svg></span>
  <span class="tb"><svg class="i"><use href="#zlast"/></svg></span>
  <span class="tb"><svg class="i"><use href="#znext"/></svg></span>
  <span class="tb"><svg class="i"><use href="#newmap"/></svg></span>
  <span class="tb"><svg class="i"><use href="#map3d"/></svg></span>
  <span class="tb"><svg class="i"><use href="#book"/></svg></span>
  <span class="tb"><svg class="i"><use href="#refresh"/></svg></span>
  <span class="sep s20"></span>
  <span class="tb"><svg class="i" viewBox="0 0 24 24"><use href="#infob"/><text class="tinfo" x="10" y="15">i</text><use href="#ptr"/></svg></span>
  <span class="tb"><svg class="i"><use href="#action"/></svg></span><span class="arr"></span>
  <span class="tb"><svg class="i"><use href="#select"/></svg></span><span class="arr"></span>
  <span class="tb"><svg class="i" viewBox="0 0 24 24"><use href="#selexb"/><text class="teps" x="9" y="17">&#949;</text></svg></span><span class="arr"></span>
  <span class="tb"><svg class="i"><use href="#desel"/></svg></span>
  <span class="tb"><svg class="i"><use href="#table"/></svg></span>
  <span class="tb"><svg class="i"><use href="#abacus"/></svg></span>
  <span class="tb"><svg class="i"><use href="#gear"/></svg></span>
  <span class="tb"><svg class="i"><use href="#sigma"/></svg></span>
  <span class="tb"><svg class="i"><use href="#ruler"/></svg></span><span class="arr"></span>
  <span class="tb"><svg class="i"><use href="#tip"/></svg></span>
  <span class="tb"><svg class="i" viewBox="0 0 24 24"><use href="#textann"/><text class="tt" x="12" y="14">T</text></svg></span><span class="arr"></span>
  <span class="sep s26"></span>
  <span class="tb"><svg class="i" viewBox="0 0 24 24"><use href="#help"/><text class="tq" x="14" y="17">?</text></svg></span>
  <span class="sep s14"></span>
  <span class="tb"><svg class="i"><use href="#magnet"/></svg></span>
  <span class="tb"><svg class="i"><use href="#vertex"/></svg></span>
  <span class="tb"><svg class="i"><use href="#dots"/></svg></span>
  <span class="tolerance"><span class="tolval">0,00000</span><span class="spinbtns dim"><i class="up"></i><i class="dn"></i></span></span>
  <span class="unit">metri<i class="dn lite"></i></span>
  <span class="tb"><svg class="i"><use href="#ygreen"/></svg></span>
  <span class="tb"><svg class="i"><use href="#xg"/></svg></span>
  <span class="tb"><svg class="i"><use href="#xg2"/></svg></span><span class="arr grey"></span>
  <span class="sep s14"></span>
  <span class="tb"><svg class="i"><use href="#recth"/></svg></span>
  <span class="sep s14"></span>
  <span class="tb"><svg class="i"><use href="#shape3d"/></svg></span>
  <span class="sep s14"></span>
  <span class="tb"><svg class="i"><use href="#greenb"/></svg></span>
</div>

<div class="tbar two">
  <span class="handle"></span>
  <span class="tb"><svg class="i"><use href="#pencils"/></svg></span>
  <span class="tb on"><svg class="i"><use href="#pencil"/></svg></span>
  <span class="tb"><svg class="i"><use href="#saveedit"/></svg></span>
  <span class="tb"><svg class="i"><use href="#addpt"/></svg></span>
  <span class="tb"><svg class="i"><use href="#movept"/></svg></span><span class="arr"></span>
  <span class="tb"><svg class="i"><use href="#node"/></svg></span>
  <span class="tb"><svg class="i"><use href="#trash"/></svg></span>
  <span class="tb"><svg class="i"><use href="#cut"/></svg></span>
  <span class="tb"><svg class="i"><use href="#copy"/></svg></span>
  <span class="tb"><svg class="i"><use href="#paste"/></svg></span>
  <span class="tb"><svg class="i"><use href="#undo"/></svg></span>
  <span class="tb"><svg class="i"><use href="#redo"/></svg></span>
  <span class="sep s18"></span>
  <span class="tb"><svg class="i"><use href="#db"/></svg></span>
  <span class="sep s22"></span>
  <span class="tb"><svg class="i" viewBox="0 0 24 24"><use href="#abc"/><text class="tl" x="14" y="12">abc</text></svg></span>
  <span class="tb"><svg class="i"><use href="#pie"/></svg></span>
  <span class="tb"><svg class="i" viewBox="0 0 24 24"><use href="#abpin"/><text class="tl" x="11" y="11">ab</text></svg></span>
  <span class="tb"><svg class="i" viewBox="0 0 24 24"><use href="#abpin2"/><text class="tl" x="11" y="11">ab</text></svg></span>
  <span class="tb"><svg class="i" viewBox="0 0 24 24"><use href="#abeye"/><text class="tl" x="13" y="10">abc</text></svg></span>
  <span class="tb"><svg class="i" viewBox="0 0 24 24"><use href="#abmove"/><text class="tl" x="13" y="10">abc</text></svg></span>
  <span class="tb"><svg class="i" viewBox="0 0 24 24"><use href="#abrot"/><text class="tl" x="13" y="10">abc</text></svg></span>
  <span class="tb"><svg class="i" viewBox="0 0 24 24"><use href="#abedit"/><text class="tl" x="13" y="10">abc</text></svg></span>
  <span class="sep s29"></span>
  <span class="tb"><svg class="i"><use href="#tri"/></svg></span>
  <span class="tb"><svg class="i"><use href="#blobg"/></svg></span>
  <span class="tb"><svg class="i"><use href="#hex"/></svg></span>
  <span class="tb"><svg class="i"><use href="#ringg"/></svg></span>
  <span class="tb"><svg class="i"><use href="#gsy"/></svg></span>
  <span class="tb"><svg class="i"><use href="#ringg"/></svg></span>
  <span class="tb"><svg class="i"><use href="#ringx"/></svg></span>
  <span class="tb"><svg class="i"><use href="#gsx"/></svg></span>
  <span class="tb"><svg class="i"><use href="#blob2"/></svg></span>
  <span class="tb"><svg class="i"><use href="#blob3"/></svg></span>
  <span class="tb"><svg class="i"><use href="#sciss"/></svg></span>
  <span class="tb"><svg class="i"><use href="#sciss"/></svg></span>
  <span class="tb"><svg class="i"><use href="#sciss2"/></svg></span>
  <span class="tb"><svg class="i"><use href="#lines3"/></svg></span>
  <span class="tb"><svg class="i"><use href="#rot"/></svg></span><span class="arr"></span>
  <span class="sep s28"></span>
  <span class="tb"><svg class="i"><use href="#nodeg"/></svg></span><span class="arr grey"></span>
  <span class="tb"><svg class="i"><use href="#ringc"/></svg></span><span class="arr grey"></span>
  <span class="tb"><svg class="i"><use href="#clouds"/></svg></span><span class="arr grey"></span>
  <span class="tb"><svg class="i"><use href="#rectg"/></svg></span><span class="arr grey"></span>
  <span class="tb"><svg class="i"><use href="#hexg"/></svg></span><span class="arr grey"></span>
  <span class="sep s14"></span>
  <span class="tb"><svg class="i"><use href="#triy"/></svg></span>
  <span class="tb"><svg class="i"><use href="#globea"/></svg></span>
  <span class="tb"><svg class="i"><use href="#globes"/></svg></span>
  <span class="tb"><svg class="i"><use href="#globeb"/></svg></span>
  <span class="sep s14"></span>
  <span class="tb"><svg class="i"><use href="#chart"/></svg></span>
</div>

<main class="main">
  <aside class="sidetb">
    <span class="sidehandle"></span>
    <svg class="i"><use href="#addlayers"/></svg>
    <svg class="i"><use href="#addgpkg"/></svg>
    <svg class="i"><use href="#addvec"/></svg>
    <svg class="i"><use href="#feather"/></svg>
    <svg class="i"><use href="#chip"/></svg>
    <span class="sidesep"></span>
    <svg class="i"><use href="#cross"/></svg>
    <svg class="i"><use href="#topo"/></svg>
  </aside>

  <section class="leftdock">
    <div class="dtitle"><span>Layer</span><span class="dbtns"><svg class="dbi"><use href="#float"/></svg><svg class="dbi"><use href="#close"/></svg></span></div>
    <div class="dtools">
      <svg class="pi"><use href="#brush"/></svg>
      <svg class="pi"><use href="#addgroup"/></svg>
      <svg class="pi"><use href="#eye"/></svg>
      <svg class="pi"><use href="#filter"/></svg>
      <svg class="pi" viewBox="0 0 24 24"><text class="teps2" x="6" y="14">&#949;</text><use href="#filterxb"/></svg>
      <span class="arr narrow"></span>
      <svg class="pi"><use href="#expand"/></svg>
      <svg class="pi"><use href="#collapse"/></svg>
      <svg class="pi"><use href="#remove"/></svg>
    </div>
    <div class="layers">
      <div class="lrow sel"><span class="cb"><svg><use href="#check"/></svg></span><svg class="licon"><use href="#punto"/></svg><b class="under">punto</b></div>
      <div class="lrow"><svg class="chev abs"><use href="#chevd"/></svg><span class="cb"><svg><use href="#check"/></svg></span><svg class="licon wide"><use href="#raster"/></svg><b>sicilia_dtm40</b></div>
      <div class="lrow sub"><span class="swatch"></span><span>1</span></div>
      <div class="lrow sub"><span class="swatch none"></span><span>3240</span></div>
    </div>
    <div class="dtitle second"><span>Browser</span><span class="dbtns"><svg class="dbi"><use href="#float"/></svg><svg class="dbi"><use href="#close"/></svg></span></div>
    <div class="dtools">
      <svg class="pi"><use href="#addres"/></svg>
      <svg class="pi"><use href="#refresh"/></svg>
      <svg class="pi"><use href="#filter"/></svg>
      <svg class="pi"><use href="#collapse"/></svg>
      <svg class="pi" viewBox="0 0 24 24"><use href="#infoc"/><text class="tinfo2" x="12" y="18">i</text></svg>
    </div>
    <div class="browser">
      <div class="bmain">
        <div class="btree">
          <div class="brow l0"><svg class="chev"><use href="#chevd"/></svg><svg class="bi"><use href="#star"/></svg><span>Preferiti</span></div>
          <div class="brow l1"><svg class="chev"><use href="#chevr"/></svg><svg class="bi"><use href="#folder"/></svg><span>C:\EsercitazioniQGIS2009</span></div>
          <div class="brow l1"><svg class="chev"><use href="#chevr"/></svg><svg class="bi"><use href="#folder"/></svg><span>C:\Users\Salvatore\condiv_rosa\QGIS_dati\progetti</span></div>
          <div class="brow l1"><svg class="chev"><use href="#chevr"/></svg><svg class="bi"><use href="#folder"/></svg><span>C:\Users\Salvatore\Desktop</span></div>
          <div class="brow l1"><svg class="chev"><use href="#chevr"/></svg><svg class="bi"><use href="#folder"/></svg><span>C:\Users\Salvatore\Desktop\a_dati_OSM\regione</span></div>
          <div class="brow l1"><svg class="chev"><use href="#chevr"/></svg><svg class="bi"><use href="#folder"/></svg><span>C:\Users\Salvatore\Documents\grassdata\sicilia</span></div>
          <div class="brow l1"><svg class="chev"><use href="#chevr"/></svg><svg class="bi"><use href="#folder"/></svg><span>C:\Users\Salvatore\Documents\progetti\qgis\dati</span></div>
          <div class="brow l1"><svg class="chev"><use href="#chevr"/></svg><svg class="bi"><use href="#folder"/></svg><span>C:\Users\Salvatore\Documents\Reference\dati\qgis</span></div>
          <div class="brow l1"><svg class="chev"><use href="#chevr"/></svg><svg class="bi"><use href="#folder"/></svg><span>C:\Users\Salvatore\Downloads\Limiti_amministrativi</span></div>
          <div class="brow l0"><svg class="chev"><use href="#chevr"/></svg><svg class="bi"><use href="#folder"/></svg><span>Home</span></div>
          <div class="brow l0"><svg class="chev"><use href="#chevr"/></svg><svg class="bi"><use href="#folder"/></svg><span>C:\</span></div>
          <div class="brow l0"><svg class="chev"><use href="#chevr"/></svg><svg class="bi"><use href="#folder"/></svg><span>D:\</span></div>
          <div class="brow l0"><svg class="chev"><use href="#chevr"/></svg><svg class="bi"><use href="#folder"/></svg><span>E:\</span></div>
          <div class="brow l0"><svg class="chev"><use href="#chevr"/></svg><svg class="bi"><use href="#folder"/></svg><span>F:\</span></div>
          <div class="brow l0"><svg class="chev"><use href="#chevd"/></svg><svg class="bi"><use href="#gpkgb"/></svg><span>GeoPackage</span></div>
          <div class="brow l1"><svg class="chev"><use href="#chevd"/></svg><svg class="bi"><use href="#gpkg"/></svg><span>contenitore.gpkg</span></div>
          <div class="brow l2"><svg class="bi"><use href="#poly"/></svg><span>circoscrizioni_pa</span></div>
          <div class="brow l2"><svg class="bi"><use href="#poly"/></svg><span>quartieri</span></div>
          <div class="brow l2 sel"><svg class="bi"><use href="#rasterb"/></svg><span>sicilia_dtm40</span></div>
          <div class="brow l1"><svg class="chev"><use href="#chevr"/></svg><svg class="bi"><use href="#gpkg"/></svg><span>dtm_632010.gpkg</span></div>
          <div class="brow l1"><svg class="chev"><use href="#chevr"/></svg><svg class="bi"><use href="#gpkg"/></svg><span>Esercizio_14.gpkg</span></div>
          <div class="brow l1"><svg class="chev"><use href="#chevr"/></svg><svg class="bi"><use href="#gpkg"/></svg><span>Limiti_istat_2011.gpkg</span></div>
        </div>
        <div class="vscroll"><svg class="sbi"><use href="#chevu"/></svg><span class="vthumb"></span><svg class="sbi low"><use href="#chevd"/></svg></div>
      </div>
      <div class="hscroll"><svg class="sbi"><use href="#chevl"/></svg><span class="hthumb"></span><svg class="sbi right"><use href="#chevrd"/></svg></div>
    </div>
  </section>

  <section class="canvas">
    <svg class="map" viewBox="374 121 1092 927" xmlns="http://www.w3.org/2000/svg">
      <defs>
        <filter id="rough" x="-3%" y="-3%" width="106%" height="106%"><feTurbulence type="fractalNoise" baseFrequency=".22" numOctaves="3" seed="4"/><feDisplacementMap in="SourceGraphic" scale="5" xChannelSelector="R" yChannelSelector="G"/></filter>
        <filter id="relief" x="0" y="0" width="100%" height="100%" color-interpolation-filters="sRGB"><feTurbulence type="turbulence" baseFrequency=".035 .05" numOctaves="5" seed="21"/><feColorMatrix values="0 0 0 1.100 0 0 0 0 1.100 0 0 0 0 1.100 0 0 0 0 0 1"/><feComponentTransfer><feFuncR type="gamma" exponent="1.400"/><feFuncG type="gamma" exponent="1.400"/><feFuncB type="gamma" exponent="1.400"/></feComponentTransfer><feGaussianBlur stdDeviation=".7"/></filter>
        <filter id="soft" x="-40%" y="-40%" width="180%" height="180%"><feGaussianBlur stdDeviation="22"/></filter>
        <radialGradient id="etna"><stop offset="0" stop-color="#fff" stop-opacity="1"/><stop offset=".05" stop-color="#e0e0e0" stop-opacity="1"/><stop offset=".16" stop-color="#9a9a9a" stop-opacity="1"/><stop offset=".34" stop-color="#6a6a6a" stop-opacity="1"/><stop offset=".58" stop-color="#3c3c3c" stop-opacity=".95"/><stop offset=".82" stop-color="#1e1e1e" stop-opacity=".6"/><stop offset="1" stop-color="#111" stop-opacity="0"/></radialGradient>
        <radialGradient id="halo"><stop offset="0" stop-color="#000" stop-opacity=".95"/><stop offset=".5" stop-color="#050505" stop-opacity=".85"/><stop offset="1" stop-color="#000" stop-opacity="0"/></radialGradient>
        <mask id="bright" maskUnits="userSpaceOnUse" x="374" y="121" width="1092" height="927">
          <rect x="374" y="121" width="1092" height="927" fill="#444"/>
          <g filter="url(#soft)">
            <ellipse cx="1170" cy="245" rx="190" ry="40" fill="#d8d8d8" transform="rotate(-14 1170 245)"/>
            <ellipse cx="935" cy="290" rx="70" ry="40" fill="#e4e4e4"/>
            <ellipse cx="740" cy="345" rx="80" ry="60" fill="#a0a0a0"/>
            <ellipse cx="1000" cy="390" rx="130" ry="60" fill="#8e8e8e"/>
            <ellipse cx="1090" cy="520" rx="120" ry="60" fill="#808080"/>
            <ellipse cx="520" cy="290" rx="70" ry="50" fill="#242424"/>
            <ellipse cx="1215" cy="440" rx="60" ry="90" fill="#000"/>
          </g>
        </mask>
        <mask id="isl" maskUnits="userSpaceOnUse" x="374" y="121" width="1092" height="927">
          <g filter="url(#rough)"><g transform="translate(380 120) scale(.6952 .3571)">
            <polygon fill="#fff" points="55,530 70,510 65,470 75,440 68,430 85,350 105,310 130,298 165,285 185,260 188,195 195,205 210,200 215,245 235,290 250,330 290,325 340,295 345,235 355,190 385,190 410,205 430,180 455,162 470,190 480,250 510,265 545,265 560,300 590,330 630,375 660,382 700,365 740,335 780,325 810,340 860,350 920,350 970,335 1020,310 1060,280 1090,225 1150,205 1180,190 1205,225 1250,250 1290,225 1325,175 1332,120 1325,118 1335,170 1380,165 1420,125 1465,95 1490,115 1512,122 1480,130 1478,200 1450,270 1420,320 1385,410 1360,450 1340,520 1310,620 1300,700 1285,750 1260,800 1262,880 1250,890 1260,960 1300,990 1335,1030 1320,1050 1305,1085 1300,1130 760,1130 750,1150 710,1150 690,1120 650,1105 610,1060 590,1020 540,990 470,930 430,880 400,820 360,795 320,800 310,760 280,730 165,740 145,700 100,650 75,600"/>
          </g></g>
          <polygon fill="#fff" filter="url(#rough)" points="1431,175 1447,165 1447,263 1437,255 1433,225 1427,205"/>
        </mask>
      </defs>
      <g mask="url(#isl)">
        <rect x="374" y="121" width="1092" height="927" fill="#040404"/>
        <g mask="url(#bright)"><rect x="374" y="121" width="1092" height="927" filter="url(#relief)"/></g>
        <ellipse cx="1222" cy="365" rx="100" ry="125" fill="url(#halo)"/>
        <ellipse cx="1226" cy="325" rx="86" ry="92" fill="url(#etna)"/>
      </g>
      <use href="#arr-ne" x="717" y="333" width="43" height="43"/>
      <use href="#arr-ne" x="703" y="595" width="43" height="43"/>
      <circle cx="783" cy="322" r="9.500" fill="#e31a2c" stroke="#a01420"/>
      <circle cx="759" cy="581" r="10" fill="#e31a2c" stroke="#8a1420"/>
      <text class="lab1" x="798" y="312">1</text>
      <text class="lab2" x="774" y="572">2</text>
    </svg>
  </section>

  <section class="rightdock">
    <div class="dtitle"><span>punto :: Totale degli elementi: 3, Filtrati: 2, Selezionati: 0</span><span class="dbtns"><svg class="dbi"><use href="#float"/></svg><svg class="dbi"><use href="#close"/></svg></span></div>
    <div class="atools">
      <span class="ab on"><svg class="ai"><use href="#pencil"/></svg></span>
      <span class="ab"><svg class="ai"><use href="#pencilsa"/></svg></span>
      <span class="ab"><svg class="ai"><use href="#saveadd"/></svg></span>
      <span class="ab"><svg class="ai"><use href="#refreshg"/></svg></span>
      <span class="asep"></span>
      <span class="ab"><svg class="ai"><use href="#tadd"/></svg></span>
      <span class="ab"><svg class="ai"><use href="#trash"/></svg></span>
      <span class="ab"><svg class="ai"><use href="#cut"/></svg></span>
      <span class="ab"><svg class="ai"><use href="#copy"/></svg></span>
      <span class="ab"><svg class="ai"><use href="#paste"/></svg></span>
      <span class="asep"></span>
      <span class="ab"><svg class="ai" viewBox="0 0 24 24"><use href="#selexb"/><text class="teps" x="9" y="17">&#949;</text></svg></span>
      <span class="ab"><svg class="ai"><use href="#selall"/></svg></span>
      <span class="ab"><svg class="ai"><use href="#invert"/></svg></span>
      <span class="ab"><svg class="ai"><use href="#desel"/></svg></span>
      <span class="ab"><svg class="ai"><use href="#filter"/></svg></span>
      <span class="ab"><svg class="ai"><use href="#panfilter"/></svg></span>
      <span class="ab"><svg class="ai"><use href="#panmap"/></svg></span>
      <span class="ab"><svg class="ai"><use href="#magy"/></svg></span>
      <span class="asep"></span>
      <span class="more">&#187;</span>
    </div>
    <div class="afield">
      <span class="fcombo"><span class="t123">123</span>&nbsp;id<i class="dn"></i></span>
      <span class="eq">=</span>
      <span class="epsb">&#949;</span>
      <span class="fcombo white"><span class="t123">123</span>&nbsp;id<svg class="cv"><use href="#chevd"/></svg></span>
      <span class="btn upall">Aggiorna tutto</span>
      <span class="btn upsel">Aggiorna selezione</span>
    </div>
    <div class="atable">
      <div class="rowhead"><span class="rh0"></span><span class="rh1">1</span><span class="rh2">2</span><span class="rhrest"></span></div>
      <table class="grid">
        <thead><tr><th>id</th><th>raster</th></tr></thead>
        <tbody><tr class="r1"><td>1</td><td>3310</td></tr><tr class="r2"><td>2</td><td>3310</td></tr></tbody>
      </table>
    </div>
    <div class="abottom">
      <span class="showall"><svg class="fi"><use href="#filter"/></svg><span>Mostra tutti gli elementi</span><i class="dn blk"></i></span>
      <span class="viewbtns"><span class="vb"><svg class="ai"><use href="#form"/></svg></span><span class="vb on"><svg class="ai"><use href="#table"/></svg></span></span>
    </div>
  </section>
</main>

<footer class="status">
  <div class="locator"><svg class="lens" viewBox="0 0 14 14"><circle cx="6" cy="6" r="4.500" fill="none" stroke="#8a8a8a" stroke-width="1.300"/><path d="M9.500 9.500L13 13" stroke="#8a8a8a" stroke-width="1.300"/></svg><span>Digita per localizzare (Ctrl+K)</span></div>
  <span class="pronto">Pronto</span>
  <span class="sgrow"></span>
  <span class="slabel">Coordinata</span>
  <span class="sinput coord">13.510,38.397</span>
  <svg class="sicon"><use href="#crsm"/></svg>
  <span class="slabel sc">Scala</span>
  <span class="sinput scale">1:982.857<svg class="cv"><use href="#chevd"/></svg></span>
  <svg class="sicon lk"><use href="#lock"/></svg>
  <span class="slabel len">Lente d'ingrandimento</span>
  <span class="sinput spinf zoomf">100%<span class="spinbtns"><i class="up"></i><i class="dn"></i></span></span>
  <span class="slabel rotl">Rotazione</span>
  <span class="sinput spinf rotf">0,0 °<span class="spinbtns"><i class="up"></i><i class="dn"></i></span></span>
  <span class="cb status-cb"><svg><use href="#check"/></svg></span>
  <span class="slabel vis">Visualizza</span>
  <svg class="sicon crs"><use href="#crs"/></svg>
  <span class="slabel eps">EPSG:4326</span>
  <svg class="sicon chat"><use href="#chat"/></svg>
</footer>
<div class="blackbar"></div>

<div class="dialog">
  <div class="dlgtitle">
    <svg class="dlglogo"><use href="#qgis"/></svg>
    <span class="dlgname">Calcolatore di campi</span>
    <span class="dlgq">?</span>
    <svg class="dlgx" viewBox="0 0 12 12"><path d="M0 0l12 12M12 0L0 12" stroke="#222"/></svg>
  </div>
  <div class="dlgbody">
    <div class="onlysel"><span class="cb off"></span><span>Aggiorna solo le 0 geometrie selezionate</span></div>
    <div class="cols">
      <div class="col-new">
        <div class="ghead"><span class="cb"><svg><use href="#check"/></svg></span><b>Crea un nuovo campo</b><span class="gline"></span></div>
        <div class="virt"><span class="cb"></span><span>Crea campo virtuale</span></div>
        <div class="formgrid">
          <span>Nome campo in uscita</span><span class="wf"></span>
          <span>Tipo campo in uscita</span><span class="wf sel">Numero intero (integer)<i class="dn blk"></i></span>
          <span>Lunghezza campo in uscita</span>
          <div class="lenrow"><span class="wf spin">10<span class="spinbtns"><i class="up"></i><i class="dn"></i></span></span><span class="prec">Precisione</span><span class="wf spin dis">0<span class="spinbtns dim"><i class="up"></i><i class="dn"></i></span></span></div>
        </div>
      </div>
      <div class="col-upd">
        <div class="ghead"><span class="cb"></span><b>Aggiorna un campo esistente</b><span class="gline"></span></div>
        <div class="updcombo"><i class="dn lite"></i></div>
      </div>
    </div>
    <div class="tabs"><span class="tab on">Espressione</span><span class="tab">Editor delle funzioni</span></div>
    <div class="exprarea">
      <div class="exprleft">
        <div class="ops"><span>=</span><span>+</span><span>-</span><span>/</span><span>*</span><span>^</span><span>||</span><span>(</span><span>)</span><span>'\n'</span></div>
        <div class="editor">raster_statistic<span class="brace">(</span> <span class="str">'sicilia_dtm40'</span>,<span class="num">1</span>,<span class="str">'max'</span><span class="brace">)</span></div>
        <div class="preview"><span>Anteprima:</span><span class="pval">3310</span></div>
      </div>
      <div class="exprmid">
        <div class="search">Cerca</div>
        <div class="ftree">
          <div class="fitems">
            <div class="frow child">layer_prop...</div>
            <div class="frow child">raster_stati...</div>
            <div class="frow child">var</div>
            <div class="frow grp"><svg class="chev"><use href="#chevr"/></svg><span>Generale</span></div>
            <div class="frow grp"><svg class="chev"><use href="#chevr"/></svg><span>Geometria</span></div>
            <div class="frow grp"><svg class="chev"><use href="#chevr"/></svg><span>Layer della mappa</span></div>
          </div>
          <div class="fscroll"><svg class="sbi"><use href="#chevu"/></svg><span class="fthumb"></span><svg class="sbi"><use href="#chevd"/></svg></div>
        </div>
      </div>
      <div class="helpbox">raster_statistic( 'sicilia_dtm40', 1,'max')</div>
    </div>
    <div class="dlgbtns"><span class="btn big dis">OK</span><span class="btn big">Annulla</span><span class="btn big">Aiuto</span></div>
  </div>
</div>

<svg class="anno a1"><use href="#arr-nw"/></svg>
<svg class="anno a2"><use href="#arr-nw"/></svg>
<svg class="anno a3"><use href="#arr-nw"/></svg>
<svg class="cursor" viewBox="0 0 12 20"><path d="M0 0v16l4-3 3 7 3-1-3-7h5z" fill="#000"/></svg>
<div class="watermark">Pigrecoinfo</div>
</body>
</html>
```
FILE: styles.css
```css
* { box-sizing: border-box; }
html, body { margin: 0; padding: 0; }
body {
  width: 1920px; height: 1080px; overflow: hidden; position: relative;
  background: #f0f0f0; color: #1a1a1a;
  font-family: "Noto Sans", "Open Sans", sans-serif; font-size: 12.5px;
  display: flex; flex-direction: column;
}
svg { display: block; flex: none; }
i { display: block; font-style: normal; }
.defs { position: absolute; width: 0; height: 0; }

.t11 { font: 700 8px "Noto Sans", sans-serif; text-anchor: middle; fill: #888; }
.tinfo { font: italic 700 15px "Liberation Serif", serif; text-anchor: middle; fill: #fff; }
.tinfo2 { font: italic 700 17px "Liberation Serif", serif; text-anchor: middle; fill: #fff; }
.teps { font: 400 20px "Liberation Serif", serif; text-anchor: middle; fill: #8c1c8c; }
.teps2 { font: 400 17px "Liberation Serif", serif; text-anchor: middle; fill: #7a4a9a; }
.tt { font: 400 14px "Liberation Serif", serif; text-anchor: middle; fill: #555; }
.tq { font: 400 14px "Noto Sans", sans-serif; text-anchor: middle; fill: #cfe0f0; }
.tl { font: 700 8.500px "Noto Sans", sans-serif; text-anchor: middle; fill: #333; }

.titlebar { height: 26px; background: #fff; display: flex; align-items: center; padding-left: 2px; flex: none; }
.qlogo { width: 20px; height: 22px; }
.apptitle { margin-left: 3px; font-size: 14px; color: #777; }
.winbtns { margin-left: auto; display: flex; gap: 46px; padding-right: 26px; }
.winb { width: 12px; height: 12px; }

.menubar { height: 26px; background: #fff; display: flex; align-items: center; gap: 16.450px; padding-left: 8px; color: #707070; flex: none; font-size: 13px; }

.tbar { height: 35px; display: flex; align-items: center; background: #f0f0f0; border-bottom: 1px solid #d6d6d6; flex: none; }
.tbar.two { height: 34px; border-bottom: 2px solid #a8a8a8; }
.handle { width: 12px; height: 26px; flex: none; position: relative; }
.handle::after { content: ""; position: absolute; left: 4px; top: 2px; bottom: 2px; border-left: 2px dotted #aaa; }
.tb { width: 30.6px; height: 30px; flex: none; display: flex; align-items: center; justify-content: center; }
.tb.on { background: #cfe4f6; border: 1px solid #9fc6e8; }
.i { width: 24px; height: 24px; }
.arr { width: 16.4px; height: 30px; flex: none; position: relative; }
.arr::after { content: ""; position: absolute; left: 4px; top: 13px; border: 4.5px solid transparent; border-top: 5px solid #000; border-bottom: 0; }
.arr.grey::after { border-top-color: #8a8a8a; }
.sep { height: 100%; flex: none; display: flex; justify-content: flex-end; align-items: center; }
.sep::before { content: ""; width: 1px; height: 100%; background: #d8d8d8; margin-right: 4px; }
.sep::after { content: ""; height: 24px; border-left: 2px dotted #aaa; margin-right: 7px; }
.s14 { width: 14.4px; } .s16 { width: 16.4px; } .s18 { width: 18.2px; } .s20 { width: 19.6px; }
.s22 { width: 22.4px; } .s26 { width: 26px; } .s28 { width: 28px; } .s29 { width: 29px; }

.tolerance { width: 116px; height: 24px; margin-left: 1px; border: 1px solid #c4c4c4; flex: none; display: flex; align-items: center; justify-content: space-between; padding: 0 1px 0 0; color: #777; }
.tolval { padding-left: 1px; }
.spinbtns { display: flex; flex-direction: column; gap: 3px; width: 11px; align-items: center; border: 1px solid #999; padding: 2px 0; flex: none; }
.spinbtns.dim { border-color: #ccc; }
.up { width: 0; height: 0; border: 3.5px solid transparent; border-bottom: 4px solid #222; border-top: 0; }
.dn { width: 0; height: 0; border: 3.5px solid transparent; border-top: 4px solid #222; border-bottom: 0; }
.spinbtns.dim .up { border-bottom-color: #999; }
.spinbtns.dim .dn { border-top-color: #999; }
.dn.lite { border-top-color: #eee; }
.unit { width: 63px; height: 24px; margin-left: 1px; background: #cccccc; color: #777; flex: none; display: flex; align-items: center; justify-content: space-between; padding: 0 5px; }

.main { display: flex; height: 928px; flex: none; }
.sidetb { width: 35px; flex: none; display: flex; flex-direction: column; align-items: center; gap: 6px; padding-top: 2px; }
.sidehandle { width: 26px; height: 2px; border-top: 2px dotted #aaa; margin-top: 3px; margin-bottom: 1px; }
.sidesep { width: 35px; height: 10px; border-top: 1px solid #d0d0d0; margin-top: -1px; margin-bottom: 1px; position: relative; }
.sidesep::after { content: ""; position: absolute; left: 5px; width: 26px; top: 5px; border-top: 2px dotted #aaa; }
.sidetb .i { width: 23px; height: 24px; }

.leftdock { width: 334px; flex: none; display: flex; flex-direction: column; padding-top: 2px; }
.dtitle { height: 24px; flex: none; background: #d6d6d6; border: 1px solid #cfcfcf; display: flex; align-items: center; justify-content: space-between; padding-left: 5px; font-size: 13px; color: #222; }
.dtitle.second { margin-top: 8px; }
.dbtns { display: flex; gap: 7px; padding-right: 3px; }
.dbi { width: 11px; height: 11px; }
.dtools { height: 28px; flex: none; display: flex; align-items: center; gap: 6px; padding-left: 5px; }
.pi { width: 17px; height: 17px; }
.arr.narrow { width: 11px; margin: 0 -1px 0 -2px; }
.arr.narrow::after { left: 1px; }

.layers { height: 278px; flex: none; background: #fff; border: 1px solid #a0a0a0; position: relative; font-size: 13px; }
.lrow { height: 22.7px; display: flex; align-items: center; padding-left: 28px; position: relative; }
.lrow.sel { background: #d8d8d8; margin-left: 25px; padding-left: 3px; }
.cb { width: 16px; height: 16px; border: 1px solid #444; background: #fff; flex: none; display: block; }
.cb svg { width: 14px; height: 14px; }
.cb.off { border-color: #d8d8d8; background: #f4f4f4; }
.licon { width: 15px; height: 15px; margin: 0 7px; }
.lrow .licon.wide { width: 20px; height: 20px; margin: 0 6px; }
.chev { width: 12px; height: 12px; flex: none; }
.chev.abs { position: absolute; left: 6px; top: 6px; }
.lrow.sub { padding-left: 53px; }
.swatch { width: 16px; height: 16px; background: #000; margin-right: 6px; flex: none; }
.swatch.none { background: transparent; }
.under { text-decoration: underline; }
.lrow b { font-weight: 600; }

.browser { flex: 1; background: #fff; border: 1px solid #a0a0a0; display: flex; flex-direction: column; min-height: 0; font-size: 13px; }
.bmain { flex: 1; display: flex; min-height: 0; overflow: hidden; }
.btree { flex: 1; min-width: 0; overflow: hidden; }
.brow { height: 24px; display: flex; align-items: center; white-space: nowrap; overflow: hidden; }
.bi { width: 17px; height: 17px; }
.brow.l0 { padding-left: 6px; }
.brow.l0 .chev { margin-right: 11px; }
.brow.l0 .bi { margin-right: 8px; }
.brow.l1 { padding-left: 31px; }
.brow.l1 .chev { margin-right: 11px; }
.brow.l1 .bi { margin-right: 8px; }
.brow.l2 { padding-left: 77px; }
.brow.l2 .bi { width: 20px; height: 20px; margin-right: 7px; }
.brow.sel { background: linear-gradient(#d6d6d6, #d6d6d6) 75px 0 no-repeat; }
.vscroll { width: 21px; flex: none; position: relative; background: #f6f6f6; display: flex; flex-direction: column; align-items: center; padding-top: 4px; }
.sbi { width: 12px; height: 12px; flex: none; }
.vthumb { width: 19px; height: 260px; background: #cdcdcd; margin-top: 5px; }
.sbi.low { margin-top: auto; margin-bottom: 5px; }
.hscroll { height: 18px; flex: none; display: flex; align-items: center; padding-left: 4px; background: #f6f6f6; }
.hthumb { width: 167px; height: 18px; background: #cdcdcd; margin-left: 6px; }
.sbi.right { margin-left: 107px; }

.canvas { width: 1094px; margin-left: 4px; flex: none; background: #fff; border: 1px solid #a0a0a0; border-top: 0; border-left-width: 2px; overflow: hidden; }
.map { width: 1092px; height: 927px; }
.lab1, .lab2 { font: 500 17px "Noto Sans", sans-serif; text-anchor: middle; }
.lab1 { fill: #fff; stroke: #000; stroke-width: 2.500px; paint-order: stroke; }
.lab2 { fill: #111; stroke: #fff; stroke-width: 2px; paint-order: stroke; }

.rightdock { width: 450px; margin-left: 3px; padding-top: 2px; flex: none; display: flex; flex-direction: column; }
.atools { height: 28px; flex: none; display: flex; align-items: center; padding-left: 3px; }
.ab { width: 23px; height: 24px; flex: none; display: flex; align-items: center; justify-content: center; }
.ab.on { background: #cfe4f6; border: 1px solid #9fc6e8; }
.ai { width: 18px; height: 18px; }
.asep { width: 1px; height: 22px; background: #d8d8d8; margin: 0 3px; flex: none; }
.more { margin-left: 22px; font-size: 15px; }
.afield { height: 30px; flex: none; display: flex; align-items: center; padding-left: 3px; font-size: 13px; }
.fcombo { width: 80px; height: 24px; background: #e1e1e1; border: 1px solid #bdbdbd; display: flex; align-items: center; padding: 0 5px; flex: none; color: #333; position: relative; justify-content: flex-start; }
.fcombo .dn { margin-left: auto; margin-right: 4px; }
.fcombo .cv { width: 11px; height: 11px; margin-left: auto; margin-right: 3px; }
.t123 { font-size: 12.5px; font-weight: 500; color: #555; }
.fcombo.white { background: #fff; border-color: #777; margin-left: 8px; height: 25px; }
.eq { width: 14px; text-align: center; flex: none; }
.epsb { width: 26px; height: 24px; background: #e1e1e1; border: 1px solid #bdbdbd; flex: none; display: flex; align-items: center; justify-content: center; font: 400 22px "Liberation Serif", serif; color: #7a4a8a; }
.btn { background: #e1e1e1; border: 1px solid #adadad; display: flex; align-items: center; justify-content: center; flex: none; height: 23px; white-space: nowrap; font-size: 13px; }
.upall { width: 100px; margin-left: 4px; }
.upsel { width: 129px; margin-left: 5px; background: #cccccc; border-color: #bfbfbf; color: #777; }
.atable { height: 814px; flex: none; margin-left: 2px; background: #fff; border: 1px solid #a0a0a0; display: flex; margin-top: 0; font-size: 12.5px; }
.rowhead { width: 16px; flex: none; display: flex; flex-direction: column; padding-left: 3px; }
.rh0 { height: 29px; margin-left: -3px; }
.rh1 { height: 36px; padding-top: 10px; }
.rh2 { height: 37px; padding-top: 10px; }
.rhrest { flex: 1; background: #efefef; margin-left: -3px; }
.grid { border-collapse: collapse; table-layout: fixed; width: 250px; height: 102px; }
.grid th { font-weight: 400; height: 29px; width: 125px; padding: 0; border-right: 1px solid #dcdcdc; color: #333; }
.grid td { text-align: right; padding: 0 3px 0 0; border-right: 1px solid #dcdcdc; border-bottom: 1px solid #dcdcdc; color: #333; }
.grid .r1 td { height: 36px; }
.grid .r2 td { height: 37px; background: #f2f2f2; }
.abottom { flex: 1; display: flex; align-items: flex-start; padding: 3px 2px 0 5px; justify-content: space-between; }
.showall { width: 183px; height: 23px; border: 1px solid #bdbdbd; background: #e1e1e1; display: flex; align-items: center; gap: 5px; padding-left: 5px; position: relative; font-size: 13px; }
.showall .dn { position: absolute; right: 3px; bottom: 3px; }
.fi { width: 18px; height: 19px; }
.dn.blk { border-top-color: #000; }
.viewbtns { display: flex; gap: 2px; }
.vb { width: 26px; height: 23px; background: #dfdfdf; border: 1px solid #cfcfcf; display: flex; align-items: center; justify-content: center; }
.vb.on { background: #cfe4f6; border-color: #5a9bd5; }

.status { height: 28px; flex: none; display: flex; align-items: center; border-top: 1px solid #cfcfcf; padding: 0 7px 0 4px; font-size: 13px; color: #222; }
.locator { width: 274px; height: 23px; background: #fff; border: 1px solid #a8a8a8; display: flex; align-items: center; gap: 7px; padding-left: 8px; color: #8a8a8a; flex: none; }
.lens { width: 14px; height: 14px; }
.pronto { margin-left: 9px; }
.sgrow { flex: 1; }
.slabel { flex: none; white-space: nowrap; }
.sinput { height: 23px; background: #fff; border: 1px solid #888; display: flex; align-items: center; padding: 0 3px; flex: none; justify-content: space-between; margin-left: 3px; }
.coord { width: 90px; margin-left: 5px; padding: 0 2px; }
.sicon { width: 19px; height: 20px; margin-left: 3px; }
.sc { margin-left: 14px; }
.scale { width: 100px; padding-left: 4px; }
.scale .cv, .cv { width: 11px; height: 11px; }
.lk { width: 17px; margin-left: 5px; }
.len { margin-left: 14px; }
.zoomf { width: 87px; margin-left: 4px; }
.rotl { margin-left: 10px; }
.rotf { width: 83px; margin-left: 10px; }
.status-cb { margin-left: 6px; }
.vis { margin-left: 6px; }
.crs { width: 20px; margin-left: 16px; }
.eps { margin-left: 5px; }
.chat { width: 20px; margin-left: 16px; }
.blackbar { height: 3px; background: #111; flex: none; }

.dialog { position: absolute; left: 912px; top: 509px; width: 944px; height: 482px; border: 1px solid #6e6e6e; background: #f0f0f0; box-shadow: 4px 6px 16px rgba(0,0,0,.28); display: flex; flex-direction: column; font-size: 13px; color: #222; }
.dlgtitle { height: 36px; background: #fff; flex: none; display: flex; align-items: center; padding-left: 9px; padding-bottom: 2px; }
.dlglogo { width: 20px; height: 20px; }
.dlgname { margin-left: 5px; font-size: 13.5px; }
.dlgq { margin-left: auto; margin-right: 48px; font-size: 15px; }
.dlgx { width: 12px; height: 12px; margin-right: 24px; }
.dlgbody { flex: 1; display: flex; flex-direction: column; padding: 13px 14px 14px 13px; min-height: 0; }
.onlysel { height: 22px; flex: none; display: flex; align-items: center; gap: 6px; color: #8a8a8a; }
.cols { display: flex; margin-top: 5px; flex: none; height: 132px; }
.col-new { width: 410px; flex: none; }
.col-upd { width: 500px; margin-left: 7px; flex: none; }
.ghead { height: 22px; display: flex; align-items: center; gap: 5px; color: #333; }
.ghead b { font-weight: 600; white-space: nowrap; }
.gline { flex: 1; height: 1px; background: #a8a8a8; }
.virt { height: 22px; margin-top: 7px; padding-left: 3px; display: flex; align-items: center; gap: 6px; }
.formgrid { display: grid; grid-template-columns: 169px 234px; row-gap: 3.500px; padding-left: 3px; margin-top: 3px; align-items: center; }
.wf { height: 23px; background: #fff; border: 1px solid #888; display: flex; align-items: center; padding: 0 3px; }
.wf.sel { background: #e1e1e1; border-color: #adadad; height: 24px; justify-content: space-between; padding-right: 5px; }
.lenrow { display: flex; align-items: center; }
.wf.spin { width: 73px; height: 22px; justify-content: space-between; padding-right: 1px; }
.prec { width: 88px; padding-left: 8px; flex: none; }
.wf.spin.dis { background: #f0f0f0; border-color: #cfcfcf; color: #888; }
.updcombo { height: 24px; margin: 45px 4px 0 3px; background: #c8c8c8; display: flex; align-items: center; justify-content: flex-end; padding-right: 5px; }
.tabs { display: flex; margin-top: 5px; height: 25px; flex: none; border-bottom: 1px solid #a8a8a8; align-items: flex-end; }
.tab { height: 23px; padding: 1px 13px 0; display: flex; align-items: center; border: 1px solid #d9d9d9; border-bottom: 0; font-size: 13.300px; }
.tab.on { height: 25px; width: 105px; background: #f8f8f8; border-color: transparent; justify-content: center; padding: 0; }
.exprarea { display: flex; padding-top: 12px; flex: none; }
.exprleft { width: 499px; flex: none; }
.ops { display: flex; gap: 4px; margin-top: 1px; height: 26px; }
.ops span { width: 26px; background: #e1e1e1; border: 1px solid #adadad; display: flex; align-items: center; justify-content: center; font-size: 12px; }
.ops span:first-child { margin-right: 1.500px; }
.editor { height: 92px; margin-top: 8px; background: #fff; border: 1px solid #888; padding: 0 6px; font-size: 16.600px; line-height: 22px; color: #111; }
.brace { background: #b9e60e; color: #00007f; display: inline-block; height: 22px; }
.str { color: #7f007f; }
.num { color: #007f7f; }
.preview { display: flex; margin-top: 9px; font-size: 12.5px; }
.pval { margin-left: 21px; }
.exprmid { width: 161px; margin-left: 15px; flex: none; }
.search { height: 23px; background: #fff; border: 1px solid #888; color: #888; padding: 2px 2px; }
.ftree { height: 110px; margin-top: 9px; background: #fff; border: 1px solid #888; display: flex; overflow: hidden; }
.fitems { flex: 1; min-width: 0; overflow: hidden; margin-top: -1px; }
.frow { height: 20px; display: flex; align-items: center; white-space: nowrap; }
.frow.child { padding-left: 53px; background: #fff; }
.frow.grp { padding-left: 6px; gap: 9px; }
.frow.grp span { background: #f0f0f0; flex: 1; height: 20px; padding-left: 4px; line-height: 20px; margin-left: -4px; }
.fscroll { width: 20px; flex: none; background: #f4f4f4; display: flex; flex-direction: column; align-items: center; justify-content: space-between; padding: 4px 0; position: relative; }
.fthumb { position: absolute; top: 44px; left: 1px; width: 18px; height: 22px; background: #cdcdcd; }
.helpbox { width: 223px; height: 142px; margin-left: 7px; flex: none; background: #fff; border: 1px solid #888; padding: 5px 4px; font-size: 14px; line-height: 20px; color: #222; }
.dlgbtns { margin-top: auto; display: flex; justify-content: flex-end; gap: 9px; }
.btn.big { width: 91px; height: 26px; }
.btn.dis { background: #cccccc; border-color: #bfbfbf; color: #777; }

.anno { position: absolute; width: 43px; height: 43px; }
.a1 { left: 1753px; top: 277px; }
.a2 { left: 1123px; top: 824px; }
.a3 { left: 1045px; top: 917px; }
.cursor { position: absolute; left: 305px; top: 237px; width: 12px; height: 20px; }
.watermark { position: absolute; left: 738px; top: 590px; font: italic 400 66px "Liberation Sans", sans-serif; color: transparent; -webkit-text-stroke: 1px #dedede; transform: rotate(-30deg); transform-origin: 0 100%; white-space: nowrap; mix-blend-mode: multiply; }
```
